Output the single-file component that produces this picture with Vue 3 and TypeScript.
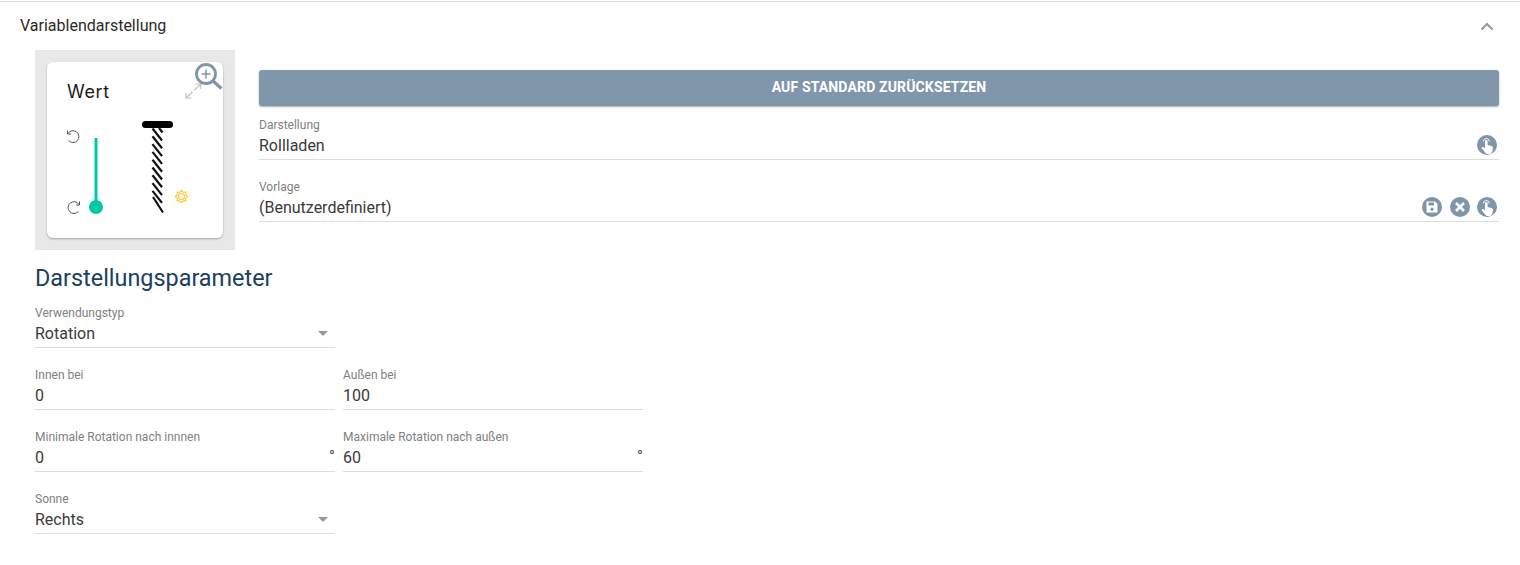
<script setup lang="ts">
interface Field { label: string; value: string; select?: boolean; unit?: string }
const rows: Field[][] = [
  [{ label: 'Verwendungstyp', value: 'Rotation', select: true }],
  [{ label: 'Innen bei', value: '0' }, { label: 'Außen bei', value: '100' }],
  [{ label: 'Minimale Rotation nach innnen', value: '0', unit: '°' }, { label: 'Maximale Rotation nach außen', value: '60', unit: '°' }],
  [{ label: 'Sonne', value: 'Rechts', select: true }],
]
const slats: number[] = [130, 137.800, 145.600, 153.400, 161.200, 169, 176.800, 184.600, 192.400]
const sunPoints: string = Array.from({ length: 16 }, (_, i) => {
  const r = i % 2 === 0 ? 6.2 : 4.6
  const a = (i * Math.PI) / 8
  return `${(181.5 + r * Math.sin(a)).toFixed(2)},${(196.5 - r * Math.cos(a)).toFixed(2)}`
}).join(' ')
</script>

<template>
  <div class="panel">
    <header class="head">
      <span class="title">Variablendarstellung</span>
      <svg class="chevron" width="14" height="9" viewBox="0 0 14 9"><path d="M1.500 7.500 7 2l5.500 5.500" fill="none" stroke="#999" stroke-width="2" /></svg>
    </header>
    <div class="body">
      <div class="top">
        <div class="preview">
          <div class="card">
            <div class="wert">Wert</div>
            <svg class="expand" width="18" height="18" viewBox="0 0 18 18">
              <path d="M2 15 8.300 9M10 7.400 16.700 1M11.500 1h5.200v5M2 10v5h5.200" fill="none" stroke="#c0c0c0" stroke-width="1.100" />
            </svg>
            <svg class="zoom" width="30" height="30" viewBox="0 0 30 30">
              <circle cx="12" cy="12" r="9.500" fill="#fff" stroke="#7f95aa" stroke-width="2.800" />
              <path d="M7.500 12h9M12 7.500v9" stroke="#7f95aa" stroke-width="1.500" />
              <path d="M19 19l8.500 7.500" stroke="#7f95aa" stroke-width="3.200" />
            </svg>
            <svg class="drawing" width="176" height="100" viewBox="47 120 176 100">
              <g fill="none" stroke="#555" stroke-width="1">
                <path d="M68 133.500A5.900 5.900 0 1 1 68.600 140.500" />
                <path d="M67.600 130.500v3.500h3.500" />
                <path d="M79 204.500A5.900 5.900 0 1 0 78.400 211.500" />
                <path d="M79.500 201.500v3.500H76" />
              </g>
              <path d="M96 138v69" stroke="#00c8a5" stroke-width="3" />
              <circle cx="96" cy="207" r="7" fill="#00c8a5" />
              <rect x="142" y="121" width="31" height="7" rx="3.500" fill="#000" />
              <g stroke="#111" stroke-width="2.200" fill="none">
                <path d="M159 128l3.500 4.500" />
                <path v-for="y in slats" :key="y" :d="`M152.500 ${y - 1.500}l9.500 12`" />
                <path d="M153 197l10 15.500" />
              </g>
              <polygon :points="sunPoints" fill="none" stroke="#fdc62e" stroke-width="1.100" />
              <circle cx="181.500" cy="196.500" r="3" fill="none" stroke="#fdc62e" stroke-width="1.100" />
            </svg>
          </div>
        </div>
        <div class="side">
          <button class="reset" type="button">AUF STANDARD ZURÜCKSETZEN</button>
          <div class="field wide">
            <label>Darstellung</label>
            <div class="value">
              <span>Rollladen</span>
              <span class="icons">
                <svg class="ic" width="20" height="20" viewBox="0 0 20 20">
                  <circle cx="10" cy="10" r="10" fill="#7f95aa" />
                  <path d="M8 6.200a1.300 1.300 0 0 1 2.600 0v3.800l3.900 1c1 .3 1.500 1 1.400 2l-.6 4-1.700 2H9.500L4.800 13.500c-.7-.9.400-2 1.400-1.400L8 13.200z" fill="#fff" />
                  <path d="M6.300 6.500a3 3 0 0 1 6 0" fill="none" stroke="#fff" stroke-width=".9" />
                </svg>
              </span>
            </div>
          </div>
          <div class="field wide">
            <label>Vorlage</label>
            <div class="value">
              <span>(Benutzerdefiniert)</span>
              <span class="icons">
                <svg class="ic" width="20" height="20" viewBox="0 0 20 20">
                  <circle cx="10" cy="10" r="10" fill="#7f95aa" />
                  <path d="M4.500 4.500h8.500l2.500 2.500v8.500h-11z" fill="#fff" />
                  <rect x="6.500" y="5.500" width="5.500" height="3" fill="#7f95aa" />
                  <circle cx="10" cy="12.200" r="1.600" fill="#7f95aa" />
                </svg>
                <svg class="ic" width="20" height="20" viewBox="0 0 20 20">
                  <circle cx="10" cy="10" r="10" fill="#7f95aa" />
                  <path d="M6 6l8 8M14 6l-8 8" stroke="#fff" stroke-width="2.600" />
                </svg>
                <svg class="ic" width="20" height="20" viewBox="0 0 20 20">
                  <circle cx="10" cy="10" r="10" fill="#7f95aa" />
                  <path d="M8 6.200a1.300 1.300 0 0 1 2.600 0v3.800l3.900 1c1 .3 1.500 1 1.400 2l-.6 4-1.700 2H9.500L4.800 13.500c-.7-.9.400-2 1.400-1.400L8 13.200z" fill="#fff" />
                  <path d="M6.300 6.500a3 3 0 0 1 6 0" fill="none" stroke="#fff" stroke-width=".9" />
                </svg>
              </span>
            </div>
          </div>
        </div>
      </div>
      <h2 class="heading">Darstellungsparameter</h2>
      <div v-for="(row, i) in rows" :key="i" class="row">
        <div v-for="f in row" :key="f.label" class="field">
          <label>{{ f.label }}</label>
          <div class="value">
            <span>{{ f.value }}</span>
            <span v-if="f.select" class="arrow"></span>
            <span v-if="f.unit" class="unit">{{ f.unit }}</span>
          </div>
        </div>
      </div>
    </div>
  </div>
</template>

<style>
body { background: #fff; }
</style>

<style scoped>
.panel {
  width: 1520px;
  height: 565px;
  padding-top: 1px;
  box-sizing: border-box;
  font-family: Roboto, "Liberation Sans", sans-serif;
  color: #212121;
  background: #fff;
  overflow: hidden;
}
.head {
  height: 49px;
  box-sizing: border-box;
  border-top: 1px solid #e0e0e0;
  padding: 0 26px 0 20px;
  display: flex;
  align-items: center;
  justify-content: space-between;
}
.title { font-size: 16px; line-height: 48px; color: #2a2a2a; }
.chevron { display: block; }
.body { padding: 0 21px 0 35px; }
.top { display: flex; gap: 24px; }
.preview {
  width: 200px;
  height: 200px;
  flex: none;
  background: #e8e8e8;
  padding: 12px;
  box-sizing: border-box;
}
.card {
  position: relative;
  width: 176px;
  height: 176px;
  background: #fff;
  border-radius: 6px;
  box-shadow: 0 1px 2px rgba(0, 0, 0, .3);
}
.wert {
  padding: 17px 0 0 20px;
  height: 41px;
  box-sizing: border-box;
  font-family: Inter, Lato, sans-serif;
  font-size: 18px;
  font-weight: 400;
  letter-spacing: .6px;
  line-height: 26px;
  color: #1a1a1a;
}
.expand { position: absolute; left: 137px; top: 21px; }
.zoom { position: absolute; left: 147px; top: 0; }
.drawing { display: block; margin-top: 17px; }
.side { flex: 1; min-width: 0; padding-top: 20px; }
.reset {
  display: block;
  width: 100%;
  height: 36px;
  border: 0;
  border-radius: 3px;
  background: #8097ab;
  color: #fff;
  font-family: Roboto, sans-serif;
  font-weight: 700;
  font-size: 14px;
  letter-spacing: .15px;
  padding: 0 0 2px;
  box-shadow: 0 1px 2px rgba(0, 0, 0, .35);
}
.field {
  width: 300px;
  height: 50px;
  padding-top: 8px;
  box-sizing: border-box;
  border-bottom: 1px solid #ddd;
}
.field.wide { width: 100%; margin-top: 12px; }
.reset + .field.wide { margin-top: 4px; }
label {
  display: block;
  font-size: 12px;
  line-height: 14px;
  color: #808080;
}
.value {
  position: relative;
  display: flex;
  align-items: center;
  justify-content: space-between;
  height: 27px;
  font-size: 16px;
  line-height: 27px;
  color: #3a3a3a;
}
.icons { display: flex; gap: 7.500px; margin: -2px 2px 0 0; }
.ic { display: block; }
.heading {
  margin: 12px 0 4px;
  font-size: 23.400px;
  line-height: 32px;
  font-weight: 400;
  color: #1c4060;
}
.row { display: flex; gap: 8px; margin-bottom: 12px; }
.arrow {
  width: 0;
  height: 0;
  margin-right: 7px;
  border-left: 5px solid transparent;
  border-right: 5px solid transparent;
  border-top: 5px solid #999;
}
.unit { font-size: 16px; color: #555; margin-top: -2px; }
</style>
